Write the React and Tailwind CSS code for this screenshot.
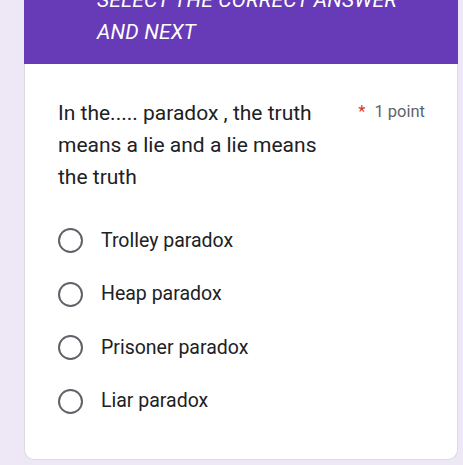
import React from "react";

const options = ["Trolley paradox", "Heap paradox", "Prisoner paradox", "Liar paradox"];

const Radio = () => (
  <span className="block w-[25px] h-[25px] rounded-full border-[2.5px] border-[#5f6368] shrink-0" />
);

const App = () => {
  return (
    <div
      className="w-[463px] h-[465px] overflow-hidden bg-[#ede7f6] pl-[24px] pr-[5px]"
      style={{ fontFamily: "Roboto, 'Noto Sans', sans-serif" }}
    >
      {/* HEADER */}
      <div className="bg-[#673ab7] h-[64px] overflow-hidden pl-[73px] pr-4">
        <div className="-mt-[16px]">
          <p className="italic text-white text-[21px] leading-[32px] tracking-[0.2px] whitespace-nowrap">
            SELECT THE CORRECT ANSWER
          </p>
          <p className="italic text-white text-[21px] leading-[32px] tracking-[0.2px]">
            AND NEXT
          </p>
        </div>
      </div>

      {/* QUESTION CARD */}
      <div className="bg-white h-[396px] rounded-b-[10px] border-x border-b border-[#dadce0] pl-[33px] pr-[32px] pt-[33px]">
        <div className="flex justify-between items-start">
          <p className="text-[21px] leading-[32px] text-[#202124] w-[280px]">
            In the..... paradox , the truth means a lie and a lie means the truth
          </p>
          <p className="text-[16.5px] leading-[32px] text-[#5f6368] mt-[-1px] whitespace-nowrap">
            <span className="text-[#d93025] mr-[9px]">*</span>1 point
          </p>
        </div>

        <div className="flex flex-col gap-[28.5px] mt-[35px]">
          {options.map((opt) => (
            <label key={opt} className="flex items-center gap-[18px] h-[25px]">
              <Radio />
              <span className="text-[19.5px] text-[#202124]">{opt}</span>
            </label>
          ))}
        </div>
      </div>
    </div>
  );
};

export default App;
